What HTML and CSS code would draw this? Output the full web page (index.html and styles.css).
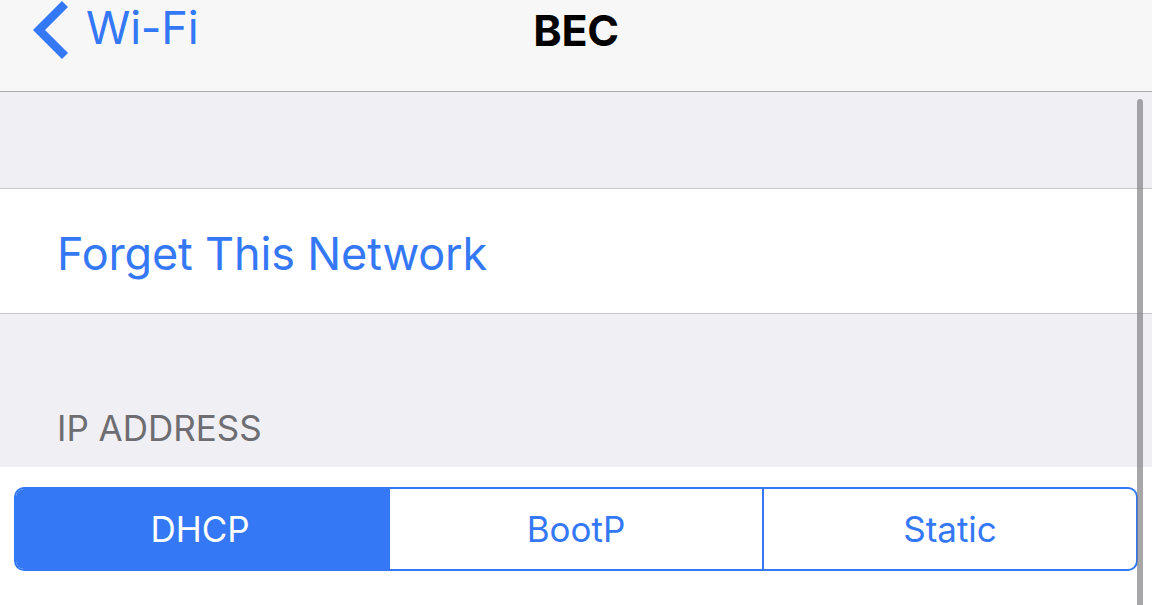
FILE: index.html
```html
<!DOCTYPE html>
<html lang="en">
<head>
<meta charset="utf-8">
<title>BEC</title>
<link rel="stylesheet" href="styles.css">
</head>
<body>
<header class="nav">
  <a class="back" href="#">
    <svg class="chevron" width="40" height="60" viewBox="0 0 40 60"><path d="M35 4 L9 30 L35 56" fill="none" stroke="#3478f6" stroke-width="8.5" stroke-linecap="butt" stroke-linejoin="miter"/></svg>
    <span class="back-label">Wi-Fi</span>
  </a>
  <h1 class="title">BEC</h1>
  <div class="nav-spacer"></div>
</header>
<main class="content">
  <div class="spacer-top"></div>
  <div class="cell"><span class="cell-action">Forget This Network</span></div>
  <div class="section-header"><span>IP ADDRESS</span></div>
  <div class="segment-wrap">
    <div class="segmented">
      <div class="seg seg-active"><span class="seg-label">DHCP</span></div>
      <div class="seg"><span class="seg-label">BootP</span></div>
      <div class="seg"><span class="seg-label">Static</span></div>
    </div>
  </div>
</main>
<div class="scrollbar"></div>
</body>
</html>
```
FILE: styles.css
```css
html, body {
  margin: 0;
  padding: 0;
  height: 100%;
  overflow: hidden;
}
body {
  font-family: Inter, "Liberation Sans", sans-serif;
  background: #ffffff;
  position: relative;
}
.nav {
  height: 91px;
  background: #f7f7f8;
  border-bottom: 1px solid #a9a9ab;
  display: grid;
  grid-template-columns: 1fr auto 1fr;
  align-items: start;
}
.back {
  display: flex;
  align-items: flex-start;
  text-decoration: none;
  color: #3478f6;
  padding-left: 30px;
  padding-top: 0;
}
.chevron {
  display: block;
}
.back-label {
  font-size: 45px;
  line-height: 58px;
  margin-left: 16px;
  margin-top: -1px;
  letter-spacing: -0.2px;
}
.title {
  margin: 0;
  font-size: 43px;
  font-weight: 700;
  line-height: 58px;
  color: #000;
  padding-top: 1px;
  letter-spacing: -0.3px;
}
.content {
  background: #efeff4;
}
.spacer-top {
  height: 96px;
  border-bottom: 1px solid #c8c7cc;
}
.cell {
  height: 125px;
  background: #fff;
  border-bottom: 1px solid #c8c7cc;
  display: flex;
  align-items: center;
  padding-left: 57px;
  box-sizing: border-box;
  padding-top: 6px;
}
.cell-action {
  color: #3478f6;
  font-size: 45px;
  letter-spacing: -0.15px;
  line-height: 58px;
}
.section-header {
  height: 153px;
  display: flex;
  align-items: flex-end;
  padding-left: 57px;
  color: #6d6d72;
  font-size: 35px;
  box-sizing: border-box;
  padding-bottom: 18px;
}
.segment-wrap {
  background: #fff;
  padding: 20px 14px 40px 14px;
}
.segmented {
  display: flex;
  height: 84px;
  border: 2px solid #3478f6;
  border-radius: 10px;
  box-sizing: border-box;
  overflow: hidden;
}
.seg {
  flex: 1 1 0;
  display: flex;
  align-items: center;
  justify-content: center;
  color: #3478f6;
  font-size: 35px;
  border-left: 2px solid #3478f6;
}
.seg:first-child {
  border-left: none;
}
.seg-active {
  background: #3478f6;
  color: #fff;
}
.seg-active .seg-label {
  margin-right: 4px;
}
.scrollbar {
  position: absolute;
  top: 99px;
  left: 1137px;
  width: 6px;
  bottom: 0;
  background: rgba(120, 120, 125, 0.65);
  border-radius: 3px 3px 0 0;
}
```
